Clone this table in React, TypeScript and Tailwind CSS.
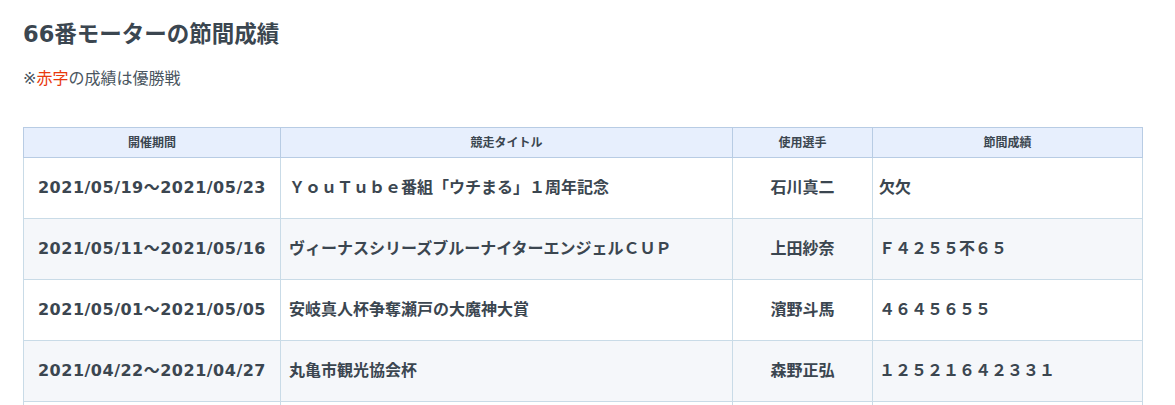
import React from 'react';

interface RaceResult {
  period: string;
  title: string;
  racer: string;
  result: string;
}

const results: RaceResult[] = [
  {
    period: '2021/05/19～2021/05/23',
    title: 'ＹｏｕＴｕｂｅ番組「ウチまる」１周年記念',
    racer: '石川真二',
    result: '欠欠',
  },
  {
    period: '2021/05/11～2021/05/16',
    title: 'ヴィーナスシリーズブルーナイターエンジェルＣＵＰ',
    racer: '上田紗奈',
    result: 'Ｆ４２５５不６５',
  },
  {
    period: '2021/05/01～2021/05/05',
    title: '安岐真人杯争奪瀬戸の大魔神大賞',
    racer: '濱野斗馬',
    result: '４６４５６５５',
  },
  {
    period: '2021/04/22～2021/04/27',
    title: '丸亀市観光協会杯',
    racer: '森野正弘',
    result: '１２５２１６４２３３１',
  },
  {
    period: '2021/04/14～2021/04/19',
    title: '日本モーターボート選手会会長賞',
    racer: '山田哲也',
    result: '３２４１５２',
  },
];

const App: React.FC = () => {
  return (
    <div
      className="min-h-[405px] bg-white px-[23px] pt-[18px] text-[#3b4650]"
      style={{ fontFamily: '"DejaVu Sans", "Noto Sans CJK JP", sans-serif' }}
    >
      <h2 className="text-[22.5px] font-bold leading-[33px]">66番モーターの節間成績</h2>
      <p className="mt-[16px] text-[16px] leading-[24px] text-[#4a5560]">
        ※<span className="text-[#e8380d]">赤字</span>の成績は優勝戦
      </p>

      {/* results table */}
      <table className="mt-[36px] w-[1120px] table-fixed border-collapse">
        <colgroup>
          <col className="w-[257px]" />
          <col className="w-[452px]" />
          <col className="w-[140px]" />
          <col />
        </colgroup>
        <thead>
          <tr className="h-[30px] bg-[#e7effd]">
            <th className="border border-[#b8cce4] text-center text-[12px] font-bold">開催期間</th>
            <th className="border border-[#b8cce4] text-center text-[12px] font-bold">競走タイトル</th>
            <th className="border border-[#b8cce4] text-center text-[12px] font-bold">使用選手</th>
            <th className="border border-[#b8cce4] text-center text-[12px] font-bold">節間成績</th>
          </tr>
        </thead>
        <tbody>
          {results.map((r, i) => (
            <tr key={r.period} className={`h-[61px] ${i % 2 === 1 ? 'bg-[#f5f7fa]' : 'bg-white'}`}>
              <td className="border border-[#c9dbe7] text-center text-[16px] font-bold tracking-[0.5px]">{r.period}</td>
              <td className="border border-[#c9dbe7] px-[8px] text-left text-[16px] font-bold">{r.title}</td>
              <td className="border border-[#c9dbe7] text-center text-[16px] font-bold">{r.racer}</td>
              <td className="border border-[#c9dbe7] px-[6px] text-left text-[16px] font-bold">{r.result}</td>
            </tr>
          ))}
        </tbody>
      </table>
    </div>
  );
};

export default App;
